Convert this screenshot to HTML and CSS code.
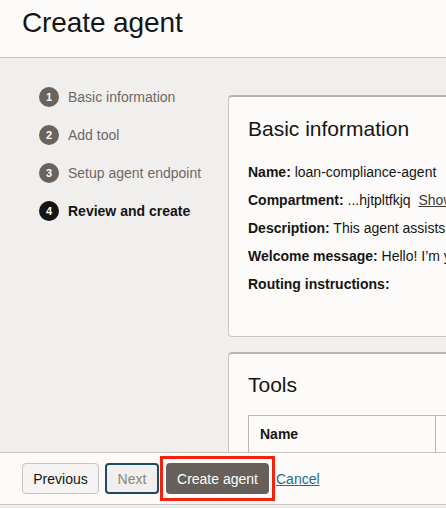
FILE: index.html
```html
<!DOCTYPE html>
<html>
<head>
<meta charset="utf-8">
<link rel="stylesheet" href="styles.css">
</head>
<body>
<div class="page">
  <header class="header"><h1 class="title">Create agent</h1></header>
  <main class="main">
    <nav class="steps">
      <div class="step"><span class="num">1</span><span class="label">Basic information</span></div>
      <div class="step"><span class="num">2</span><span class="label">Add tool</span></div>
      <div class="step"><span class="num">3</span><span class="label">Setup agent endpoint</span></div>
      <div class="step current"><span class="num">4</span><span class="label">Review and create</span></div>
    </nav>
    <div class="content">
      <section class="panel panel-basic">
        <h2 class="panel-title">Basic information</h2>
        <div class="rows">
          <div class="row"><b>Name:</b> loan-compliance-agent</div>
          <div class="row"><b>Compartment:</b> ...hjtpltfkjq <a class="show">Show</a></div>
          <div class="row"><b>Description:</b> This agent assists with loan compliance checks</div>
          <div class="row"><b>Welcome message:</b> Hello! I’m your loan compliance assistant</div>
          <div class="row"><b>Routing instructions:</b></div>
        </div>
      </section>
      <section class="panel panel-tools">
        <h2 class="panel-title">Tools</h2>
        <div class="table">
          <div class="th th-name">Name</div>
          <div class="th">Type</div>
        </div>
      </section>
    </div>
  </main>
  <footer class="footer">
    <button class="btn prev">Previous</button>
    <button class="btn next">Next</button>
    <span class="highlight"><button class="btn primary">Create agent</button></span>
    <a class="cancel">Cancel</a>
  </footer>
</div>
</body>
</html>
```

FILE: styles.css
```css
html, body {
  margin: 0;
  padding: 0;
  width: 446px;
  height: 508px;
  overflow: hidden;
  background: #f1efed;
  font-family: "Liberation Sans", Arial, Helvetica, sans-serif;
  color: #161513;
}
.page {
  display: flex;
  flex-direction: column;
  height: 508px;
}
.header {
  height: 57px;
  background: #fcfbfa;
  border-bottom: 1px solid #c9c5c0;
  display: flex;
  align-items: flex-start;
  flex: none;
}
.title {
  margin: 6px 0 0 22px;
  font-size: 28px;
  font-weight: normal;
  line-height: 34px;
  letter-spacing: -0.1px;
}
.main {
  flex: none;
  height: 394px;
  display: flex;
  overflow: hidden;
}
.steps {
  width: 189px;
  padding: 28px 0 0 39px;
  display: flex;
  flex-direction: column;
  gap: 17px;
  flex: none;
}
.step {
  display: flex;
  align-items: center;
  gap: 9px;
  height: 21px;
  font-size: 14px;
  color: #6f6964;
}
.num {
  width: 20px;
  height: 20px;
  border-radius: 50%;
  background: #6a625d;
  color: #fff;
  font-size: 11px;
  font-weight: bold;
  display: flex;
  align-items: center;
  justify-content: center;
  flex: none;
}
.step.current { color: #161513; font-weight: bold; }
.step.current .num { background: #161513; }
.content {
  padding-top: 37px;
  display: flex;
  flex-direction: column;
  gap: 15px;
  flex: none;
}
.panel {
  flex: none;
  width: 420px;
  background: #fcfbfa;
  border: 1px solid #c9c5c0;
  border-top: 2px solid #bab5af;
  border-radius: 4px;
  padding: 0 0 0 19px;
  box-sizing: border-box;
}
.panel-basic { height: 242px; }
.panel-tools { height: 140px; }
.panel-title {
  margin: 19px 0 0 0;
  font-size: 21px;
  font-weight: normal;
  line-height: 26px;
}
.rows {
  margin-top: 22px;
  display: flex;
  flex-direction: column;
  gap: 11px;
}
.row {
  font-size: 14px;
  line-height: 17px;
  white-space: nowrap;
  color: #161513;
}
.row b { font-weight: bold; }
.show {
  margin-left: 4px;
  text-decoration: underline;
  color: #3d3935;
}
.panel-tools .panel-title { margin-top: 18px; }
.table {
  margin-top: 17px;
  display: flex;
  border-top: 1px solid #bcb7b1;
  border-left: 1px solid #bcb7b1;
  height: 60px;
}
.th {
  font-size: 14px;
  font-weight: bold;
  padding: 10px 0 0 11px;
  width: 200px;
}
.th-name {
  width: 175px;
  border-right: 1px solid #bcb7b1;
}
.footer {
  flex: none;
  height: 51px;
  background: #fcfbfa;
  border-top: 1px solid #c9c5c0;
  border-bottom: 1px solid #c9c5c0;
  display: flex;
  align-items: center;
  padding-left: 22px;
  gap: 6px;
}
.btn {
  font-family: inherit;
  font-size: 14px;
  height: 31px;
  border-radius: 4px;
  padding: 0 10px;
  box-sizing: border-box;
}
.prev {
  width: 77px;
  background: #f5f4f2;
  border: 1px solid #c7c3be;
  color: #161513;
}
.next {
  width: 54px;
  background: #f1efed;
  border: 2px solid #1f4b5e;
  color: #8a8580;
}
.highlight {
  border: 3px solid #f2220f;
  padding: 4px 3px;
  display: flex;
  margin-left: -5px;
}
.primary {
  width: 103px;
  background: #665f5a;
  border: none;
  color: #fff;
}
.cancel {
  margin-left: -5px;
  font-size: 14px;
  color: #1c6c8f;
  text-decoration: underline;
}
```
